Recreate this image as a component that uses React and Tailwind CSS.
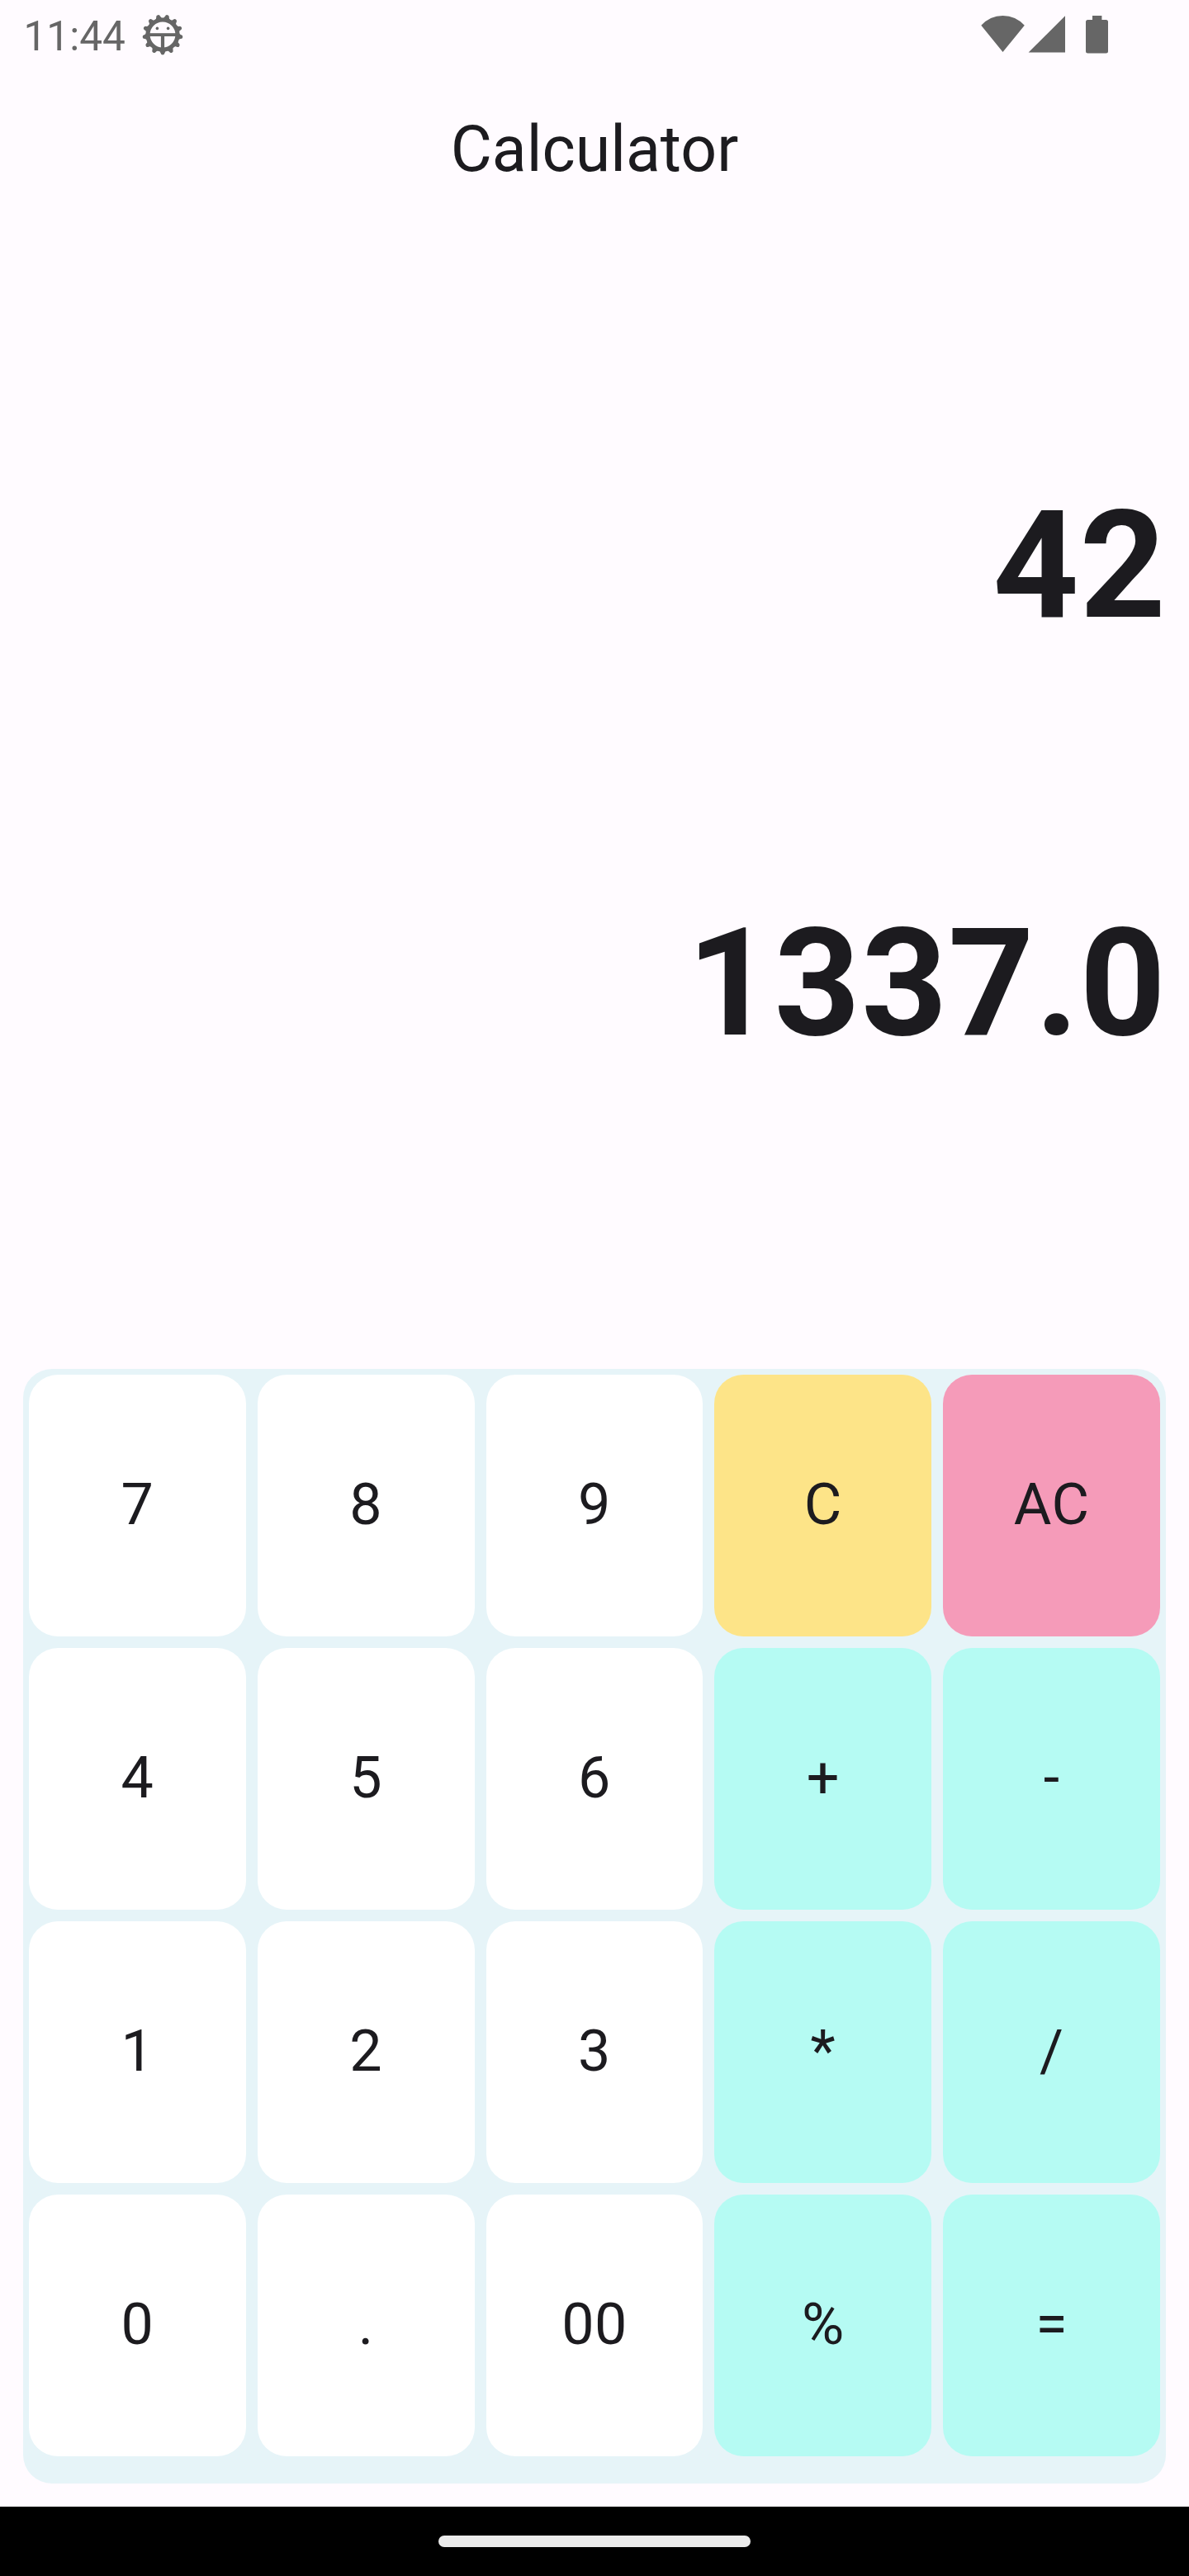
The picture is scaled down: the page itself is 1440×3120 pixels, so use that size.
const keys = [
  ['7', 'bg-white'], ['8', 'bg-white'], ['9', 'bg-white'], ['C', 'bg-[#fde488]'], ['AC', 'bg-[#f59bb9]'],
  ['4', 'bg-white'], ['5', 'bg-white'], ['6', 'bg-white'], ['+', 'bg-[#b5fbf3]'], ['-', 'bg-[#b5fbf3]'],
  ['1', 'bg-white'], ['2', 'bg-white'], ['3', 'bg-white'], ['*', 'bg-[#b5fbf3]'], ['/', 'bg-[#b5fbf3]'],
  ['0', 'bg-white'], ['.', 'bg-white'], ['00', 'bg-white'], ['%', 'bg-[#b5fbf3]'], ['=', 'bg-[#b5fbf3]'],
];

const teeth = Array.from({ length: 13 }, (_, i) => (i * 360) / 13);

function DebugIcon() {
  return (
    <svg className="h-[50px] w-[50px]" viewBox="0 0 50 50" fill="currentColor">
      {teeth.map((angle) => (
        <g key={angle} transform={`rotate(${angle} 25 25)`}>
          <path d="M19.5 44 Q22 44.6 22.6 47.2 H27.4 Q28 44.6 30.5 44 Z" />
          <circle cx="25" cy="47.1" r="2.4" />
        </g>
      ))}
      <circle cx="25" cy="25" r="18" fill="none" stroke="currentColor" strokeWidth="5.2" />
      <rect x="8" y="23.2" width="34" height="3.8" />
      <rect x="22.9" y="25" width="4.2" height="17" />
      <circle cx="18.4" cy="17.4" r="1.8" />
      <circle cx="31.6" cy="17.4" r="1.8" />
    </svg>
  );
}

function SystemIcons() {
  return (
    <svg className="mb-[2px] h-[46px] w-[154px] overflow-visible" viewBox="0 0 154 46" fill="currentColor">
      <path d="M0.3 12.8 Q11 1 26.5 1 Q42 1 52.8 12.8 L26.5 45 Z" />
      <path d="M102 1.3 V45.4 H57.6 Z" />
      <path d="M135 1 H146.4 V6 H151.5 Q154 6 154 8.5 V44 Q154 46.5 151.5 46.5 H129.5 Q127 46.5 127 44 V8.5 Q127 6 129.5 6 H135 Z" />
    </svg>
  );
}

export default function App() {
  return (
    <div className="flex h-[3120px] w-[1440px] flex-col bg-[#fffbff] font-['Roboto',sans-serif] text-[#1c1b1f]">
      <header className="flex h-[84px] shrink-0 items-center justify-between pl-[28.5px] pr-[98px] text-[#666]">
        <div className="flex items-center gap-5">
          <span className="mt-[5px] text-[49.5px] leading-none">11:44</span>
          <DebugIcon />
        </div>
        <SystemIcons />
      </header>
      <h1 className="mt-[55px] text-center text-[77px] leading-[84px]">Calculator</h1>
      <main className="flex flex-1 flex-col items-end pl-7 pr-[27px]">
        <output className="mt-[362px] text-[182px] font-bold leading-[200px] tracking-[1px]">42</output>
        <output className="mt-[306px] text-[182px] font-bold leading-[200px] tracking-[1px]">1337.0</output>
      </main>
      <section className="mx-7 mb-7 grid h-[1350px] shrink-0 grid-cols-5 content-start gap-[14px] rounded-[35px] bg-[#e6f4f8] p-[7px]">
        {keys.map(([label, color]) => (
          <button key={label} className={`h-[317px] rounded-[35px] pb-[2px] text-[70px] tracking-[0.5px] ${color}`}>
            {label}
          </button>
        ))}
      </section>
      <nav className="flex h-[84px] shrink-0 items-center justify-center bg-black">
        <div className="h-[14px] w-[378px] rounded-full bg-[#ebebeb]" />
      </nav>
    </div>
  );
}
